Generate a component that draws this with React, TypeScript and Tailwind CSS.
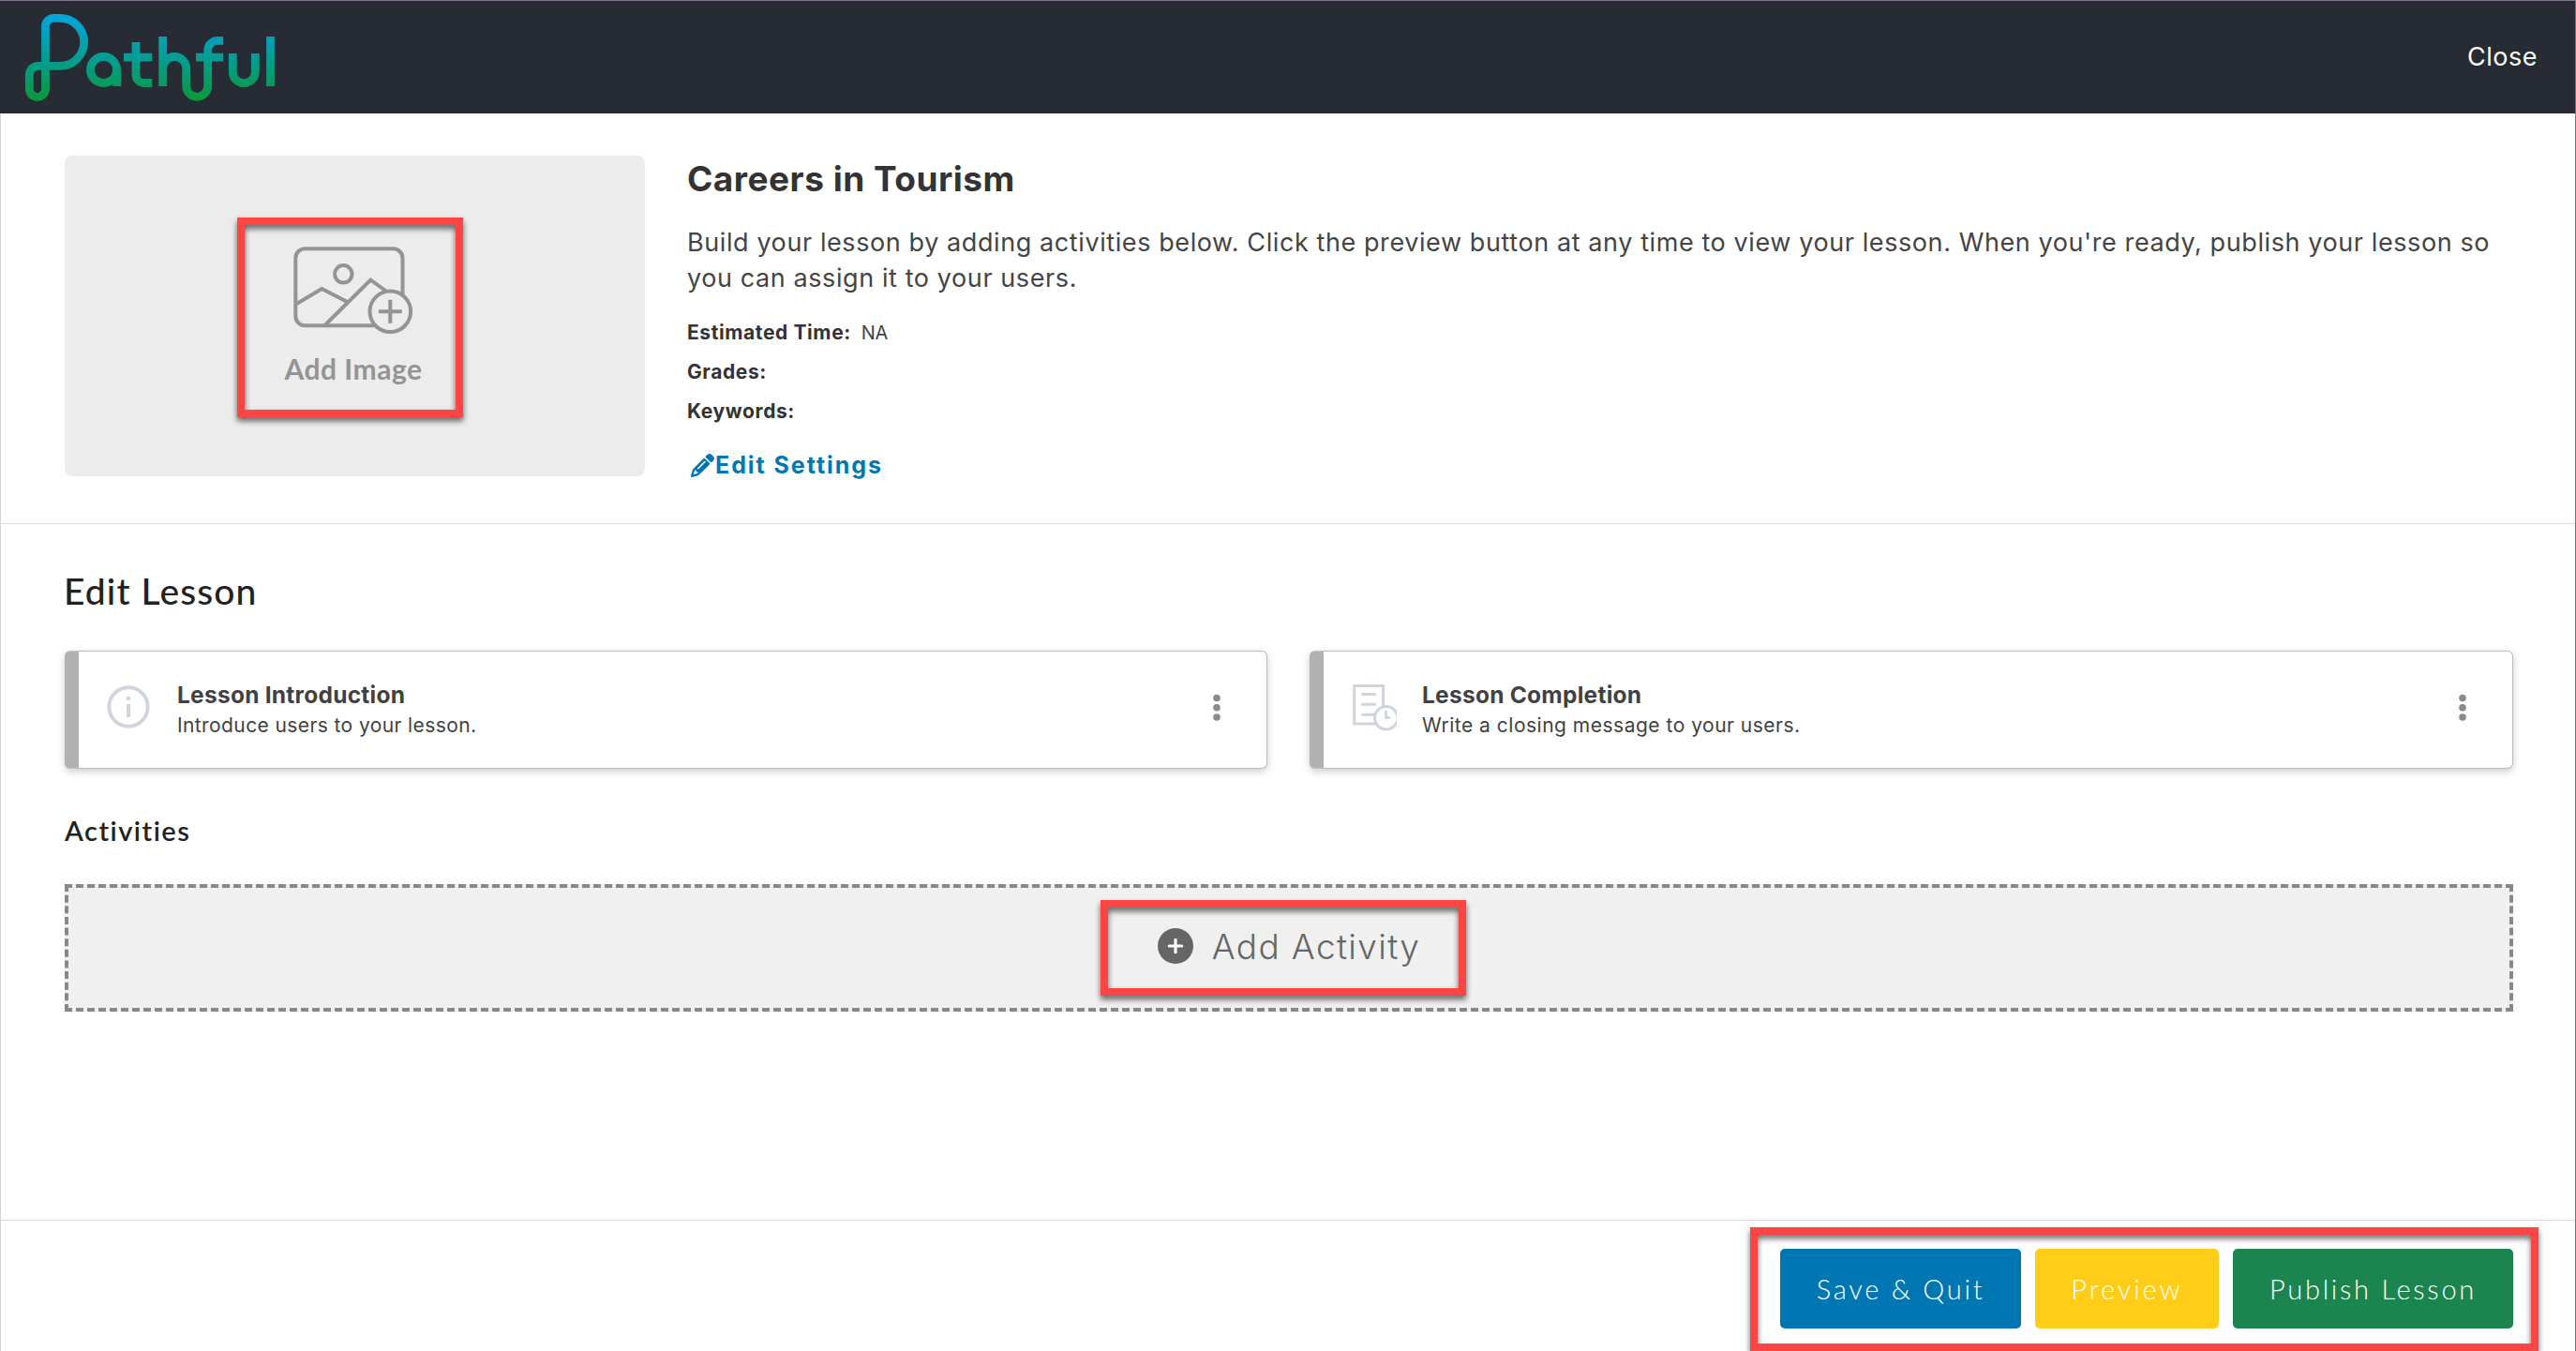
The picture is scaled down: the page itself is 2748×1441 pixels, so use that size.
import type { ReactNode } from "react";
import { FaPencil } from "react-icons/fa6";

const highlight = "pointer-events-none absolute border-8 border-[#ff4444] drop-shadow-[0_4px_3px_rgba(0,0,0,0.6)]";

function Logo() {
  return (
    <svg width="300" height="120" viewBox="0 0 300 120" fill="none" stroke="url(#brand)" strokeWidth="8.8">
      <defs>
        <linearGradient id="brand" gradientUnits="userSpaceOnUse" x1="0" y1="18" x2="0" y2="106">
          <stop offset="0" stopColor="#00a5d9" />
          <stop offset="0.5" stopColor="#049d93" />
          <stop offset="1" stopColor="#0b983c" />
        </linearGradient>
      </defs>
      <path d="M48.5 94.7V28.3a9 9 0 0 1 9-9H64.2a25.5 25.5 0 0 1 0 51H41a9.7 9.7 0 0 0-9.7 9.7V94.7a8.6 8.6 0 0 0 17.2 0Z" />
      <circle cx="110.5" cy="74.5" r="14.1" />
      <path d="M124.8 74V92" />
      <path d="M145 45V80a8.5 8.5 0 0 0 8.5 8.5H162.3M132 61.2H162.3" />
      <path d="M173.7 39V92M173.7 73a12.5 12.5 0 0 1 25 0V91.8a11.5 11.5 0 0 0 23 0V54a10.7 10.7 0 0 1 10.7-10.7H238.2M209 61.2H238.2" />
      <path d="M248.3 57V76.7a12 12 0 0 0 24 0V57" />
      <path d="M288.5 39V92" />
    </svg>
  );
}

function AddImageIcon() {
  return (
    <svg className="-ml-[2px]" width="135" height="100" viewBox="0 0 135 100" fill="none" stroke="#949494" strokeWidth="4">
      <rect x="5.3" y="5.3" width="114.2" height="82" rx="10" />
      <circle cx="56.3" cy="32.3" r="9.2" />
      <path d="M6.5 64 33.3 48 60 61.7M36 87.5 85.3 38.5 104 52" />
      <circle cx="106.3" cy="72.3" r="21.8" fill="#ececec" />
      <path d="M93.8 72.3h25M106.3 59.8v25" />
    </svg>
  );
}

function InfoIcon() {
  return (
    <svg className="shrink-0" width="48" height="48" viewBox="0 0 48 48" fill="none" stroke="#d0d5dc">
      <circle cx="24" cy="24" r="20.7" strokeWidth="3.9" />
      <path d="M24 13v4M24 21v14" strokeWidth="4" />
    </svg>
  );
}

function CompletionIcon() {
  return (
    <svg className="ml-px shrink-0" width="48" height="50" viewBox="0 0 48 50" fill="none" stroke="#d0d5dc" strokeWidth="3">
      <rect x="2.7" y="1.5" width="30.9" height="40.5" />
      <path d="M11.5 10.4h13.2M11.5 21.3h13.2M11.5 32.3h13.2" strokeLinecap="round" />
      <circle cx="36.7" cy="35.7" r="12.2" fill="#fff" />
      <path d="M36.4 29v6.6h3.6" strokeLinecap="round" strokeLinejoin="round" />
    </svg>
  );
}

function Kebab() {
  return (
    <svg className="mt-[45px] mr-[49px] ml-auto" width="8" height="30" viewBox="0 0 8 30" fill="#8a8a8a">
      <circle cx="4" cy="4.5" r="3.8" />
      <circle cx="4" cy="14.7" r="3.8" />
      <circle cx="4" cy="25" r="3.8" />
    </svg>
  );
}

function LessonCard({ icon, title, text, titleClass, textClass }: { icon: ReactNode; title: string; text: string; titleClass: string; textClass: string }) {
  return (
    <div className="flex h-[126px] items-start rounded-md border border-l-[15px] border-[#b9babb] border-l-[#b0b1b3] bg-white shadow-[0_3px_8px_rgba(0,0,0,0.2)]">
      <div className="mt-[35px] ml-[29px] w-12">{icon}</div>
      <div className="mt-[31px] ml-7">
        <h3 className={`text-[24.5px] leading-[30px] font-bold text-[#414141] ${titleClass}`}>{title}</h3>
        <p className={`mt-[3px] text-[21px] leading-[30px] text-[#414141] ${textClass}`}>{text}</p>
      </div>
      <Kebab />
    </div>
  );
}

export default function App() {
  return (
    <div className="flex h-[1441px] w-[2748px] flex-col overflow-hidden border-r border-[#a04fb5] bg-white font-['Inter',sans-serif]">
      <header className="flex h-[121px] shrink-0 justify-between border-t border-[#7f7490] bg-[#262b34]">
        <div className="-mt-px">
          <Logo />
        </div>
        <button className="mt-[42px] mr-10 h-9 text-[27px] leading-9 tracking-[0.5px] text-white">Close</button>
      </header>

      <div className="flex grow flex-col border-l border-[#d4d4d4]">
        <section className="flex h-[438px] shrink-0 border-b border-[#d9dadb] pt-[45px] pr-[65px] pl-[68px]">
          <div className="relative flex h-[342px] w-[619px] shrink-0 flex-col items-center rounded-lg bg-[#ececec] pt-[94px]">
            <AddImageIcon />
            <span className="mt-[15px] -ml-[3px] font-['Lato',sans-serif] text-[30px] leading-9 font-bold tracking-[0.5px] text-[#949494]">Add Image</span>
            <div className={`${highlight} top-[66px] left-[184px] h-[213px] w-[241px]`} />
          </div>
          <div className="ml-[45px] pt-[3px] text-[#333]">
            <h1 className="text-[37px] leading-[44px] font-bold tracking-[0.5px]">Careers in Tourism</h1>
            <p className="mt-[27px] text-[27px] leading-[38px] tracking-[0.59px] text-[#444]">
              Build your lesson by adding activities below. Click the preview button at any time to view your lesson. When you're ready, publish your lesson so
              you can assign it to your users.
            </p>
            <dl className="mt-[18px] text-[21px] leading-[42px]">
              <div className="flex gap-[11px]">
                <dt className="font-bold tracking-[0.6px]">Estimated Time:</dt>
                <dd className="text-[20px] tracking-[-0.5px] text-[#444]">NA</dd>
              </div>
              <dt className="font-bold tracking-[0.6px]">Grades:</dt>
              <dt className="font-bold tracking-[0.6px]">Keywords:</dt>
            </dl>
            <a className="mt-[21px] flex items-start pl-1 text-[#0077b3]">
              <FaPencil className="mt-[3px] mr-px size-[25px]" />
              <span className="text-[25px] leading-[30px] font-bold tracking-[1.95px]">Edit Settings</span>
            </a>
          </div>
        </section>

        <main className="grow pt-[47px] pr-[66px] pl-[68px]">
          <h2 className="-ml-px font-['Lato',sans-serif] text-[39px] leading-[48px] font-medium tracking-[1.1px] text-[#222]">Edit Lesson</h2>
          <div className="mt-10 grid grid-cols-[1283px_1284px] gap-[45px]">
            <LessonCard icon={<InfoIcon />} title="Lesson Introduction" text="Introduce users to your lesson." titleClass="tracking-[0.25px]" textClass="tracking-[0.4px]" />
            <LessonCard icon={<CompletionIcon />} title="Lesson Completion" text="Write a closing message to your users." titleClass="tracking-[0.25px]" textClass="tracking-[0.5px]" />
          </div>
          <h2 className="mt-12 font-['Lato',sans-serif] text-[29px] leading-9 font-semibold tracking-[1.5px] text-[#222]">Activities</h2>
          <div className="relative mt-[39px] flex h-[136px] items-start justify-center border-4 border-dashed border-[#888] bg-[#f0f0f0] pt-10 text-[#666]">
            <svg className="mt-[3px]" width="38" height="38" viewBox="0 0 38 38">
              <circle cx="19" cy="19" r="19" fill="#666" />
              <path d="M12.3 19h13.4M19 12.3v13.4" stroke="#fff" strokeWidth="3.2" strokeLinecap="round" />
            </svg>
            <span className="mt-px ml-5 text-[37px] leading-[44px] font-[350] tracking-[1.35px]">Add Activity</span>
            <div className={`${highlight} top-[13px] left-[1101px] h-[102px] w-[390px]`} />
          </div>
        </main>

        <footer className="relative flex h-[140px] shrink-0 justify-end gap-[15px] border-t border-[#d8dce6] pt-[30px] pr-[66px] font-['Lato',sans-serif] text-[29px] font-light text-white">
          <button className="h-[85px] w-[257px] rounded-[5px] bg-[#0077b3] tracking-[2.75px]">Save &amp; Quit</button>
          <button className="h-[85px] w-[196px] rounded-[5px] bg-[#ffcd17] tracking-[2.9px]">Preview</button>
          <button className="h-[85px] w-[299px] rounded-[5px] bg-[#1c854f] tracking-[2.75px]">Publish Lesson</button>
          <div className={`${highlight} top-[7px] right-[39px] h-[132px] w-[841px]`} />
        </footer>
      </div>
    </div>
  );
}
